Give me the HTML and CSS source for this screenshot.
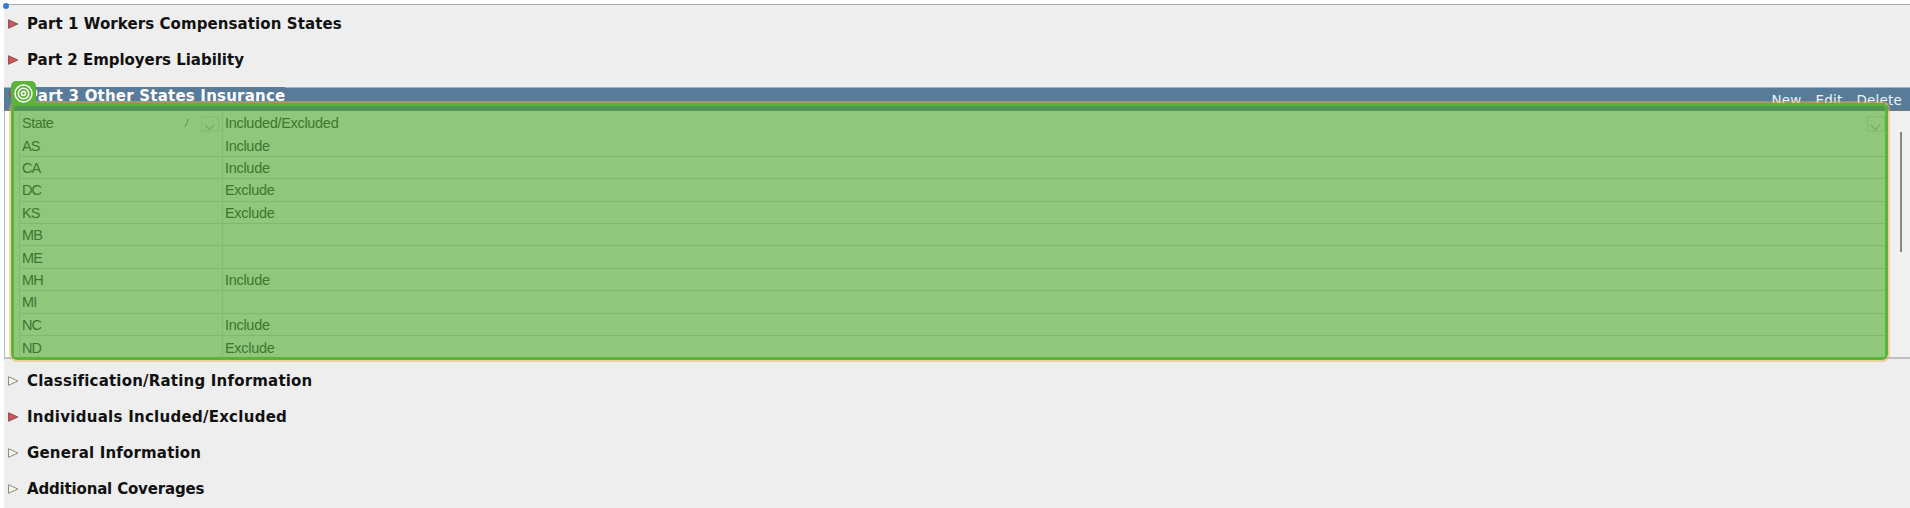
FILE: index.html
```html
<!DOCTYPE html>
<html lang="en">
<head>
<meta charset="utf-8">
<title>Workers Compensation</title>
<link rel="stylesheet" href="styles.css">
</head>
<body>
<svg class="defs" width="0" height="0"><defs>
<symbol id="arrow" viewBox="0 0 12 12"><path d="M1.500 1.700 10.800 6 1.500 10.300Z"/></symbol>
<symbol id="chev" viewBox="0 0 18 16"><path d="M.5.5h17v14.600h-17Z" opacity=".4"/><path d="m4 9 4.500 4.500L13 9"/></symbol>
</defs></svg>
<main class="page">
<section class="section"><svg class="arrow red"><use href="#arrow"/></svg><h2 class="t1">Part 1 Workers Compensation States</h2></section>
<section class="section"><svg class="arrow red"><use href="#arrow"/></svg><h2 class="t2">Part 2 Employers Liability</h2></section>
<section class="panel">
<header class="bar"><svg class="arrow red open"><use href="#arrow"/></svg><h2 class="t3">Part 3 Other States Insurance</h2>
<nav class="actions"><span>New</span><span>Edit</span><span>Delete</span></nav></header>
<div class="body">
<div class="grid">
<div class="row head"><div class="cell state"><span>State</span><svg class="sort" viewBox="0 0 6 10"><path d="M1 9 4.500 1"/></svg><svg class="chev"><use href="#chev"/></svg></div><div class="cell inc"><span class="wide">Included/Excluded</span><svg class="chev"><use href="#chev"/></svg></div></div>
<div class="row"><div class="cell state">AS</div><div class="cell inc">Include</div></div>
<div class="row"><div class="cell state">CA</div><div class="cell inc">Include</div></div>
<div class="row"><div class="cell state">DC</div><div class="cell inc">Exclude</div></div>
<div class="row"><div class="cell state">KS</div><div class="cell inc">Exclude</div></div>
<div class="row"><div class="cell state">MB</div><div class="cell inc"></div></div>
<div class="row"><div class="cell state">ME</div><div class="cell inc"></div></div>
<div class="row"><div class="cell state">MH</div><div class="cell inc">Include</div></div>
<div class="row"><div class="cell state">MI</div><div class="cell inc"></div></div>
<div class="row"><div class="cell state">NC</div><div class="cell inc">Include</div></div>
<div class="row last"><div class="cell state">ND</div><div class="cell inc">Exclude</div></div>
</div>
<div class="gutter"><div class="thumb"></div></div>
</div>
<div class="highlight"></div>
<svg class="target" viewBox="0 0 25 25"><circle cx="12.500" cy="12.500" r="8.500"/><circle cx="12.500" cy="12.500" r="5.200"/><circle cx="12.500" cy="12.500" r="2"/></svg>
</section>
<section class="section"><svg class="arrow"><use href="#arrow"/></svg><h2 class="t4">Classification/Rating Information</h2></section>
<section class="section"><svg class="arrow red"><use href="#arrow"/></svg><h2 class="t5">Individuals Included/Excluded</h2></section>
<section class="section"><svg class="arrow"><use href="#arrow"/></svg><h2 class="t6">General Information</h2></section>
<section class="section"><svg class="arrow"><use href="#arrow"/></svg><h2 class="t7">Additional Coverages</h2></section>
<i class="dot"></i>
</main>
</body>
</html>
```
FILE: styles.css
```css
* { box-sizing: border-box; }
body { margin: 0; height: 508px; overflow: hidden; background: #fff; font-family: "Liberation Sans", Arial, sans-serif; }
.defs { position: absolute; }
.page { position: relative; margin-left: 4px; height: 508px; padding-top: 6px; background: linear-gradient(#fff 4px, #aaa 4px, #aaa 5px, #eee 5px); }
.section { height: 36px; padding-left: 3px; display: flex; align-items: center; }
h2 { margin: 0 0 0 8px; font: bold 15px/20px "DejaVu Sans", Verdana, sans-serif; color: #111; white-space: nowrap; }
.t1 { letter-spacing: .09px; }
.t2 { letter-spacing: -.03px; }
.t3 { letter-spacing: .21px; }
.t4 { letter-spacing: .2px; }
.t5 { letter-spacing: .27px; }
.t6 { letter-spacing: .18px; }
.t7 { letter-spacing: -.17px; }
.arrow { width: 12px; height: 12px; flex: none; fill: #fff8ec; stroke: #8a8a80; stroke-width: 1; }
.arrow.red { fill: #cf5357; stroke: #87575a; }
.open { transform: rotate(90deg); }
.panel { position: relative; height: 272px; margin: 9px 0 4px; display: flex; flex-direction: column; }
.bar { height: 23px; background: #587b99; border-top: 1px solid #a3b4c2; display: flex; align-items: flex-start; padding: 0 8px 0 3px; }
.bar .arrow { margin-top: 3px; }
.bar h2 { margin-top: -1px; padding-top: 1px; background: #587b99; color: #fff; line-height: 17px; }
.actions { margin-left: auto; display: flex; gap: 14px; font: 13.5px/24px "DejaVu Sans", Verdana, sans-serif; letter-spacing: .2px; color: #eef4f8; }
.body { height: 249px; border-bottom: 2px solid #bfbfbf; border-left: 1px solid #bbb; border-top: 1px solid #777; display: flex; background: #fff; }
.grid { flex: 1; margin-left: 14px; padding-top: 1px; }
.row { height: 22.4px; display: flex; border-bottom: 1px solid #d8d8d8; font-size: 14.5px; color: #2a2a2a; }
.row.head { border-bottom-color: transparent; }
.row.last { border-bottom: 0; }
.cell { display: flex; align-items: center; border-left: 1px solid #ddd; padding: 1px 0 0 2px; }
.state { width: 203px; letter-spacing: -.9px; }
.head .state { letter-spacing: -.5px; }
.inc { flex: 1; letter-spacing: -.3px; }
.sort { width: 6px; height: 10px; margin-left: auto; margin-right: 11px; fill: none; stroke: #777; }
.chev { width: 18px; height: 16px; margin: 1px 3px 0 0; fill: none; stroke: #bbb; stroke-width: 1.3; }
.inc .chev { margin-left: auto; }
.gutter { width: 22px; background: #f0f0f0; display: flex; justify-content: flex-end; align-items: flex-start; padding: 21px 8px 0 0; }
.thumb { width: 2px; height: 120px; background: #888; }
.highlight { position: absolute; left: 7px; top: 16px; width: 1877px; height: 257px; border: 3px solid #5ab437; border-radius: 6px; background: rgba(74,165,45,.62); background-clip: padding-box; box-shadow: 0 0 0 2px rgba(237,175,80,.5); }
.target { position: absolute; left: 7px; top: -6px; width: 25px; height: 25px; border-radius: 5px; background: #5ab437; fill: none; stroke: #fff; stroke-width: 1.5; }
.dot { position: absolute; left: -1px; top: 3px; width: 6px; height: 6px; border-radius: 50%; background: #347ed9; }
```
